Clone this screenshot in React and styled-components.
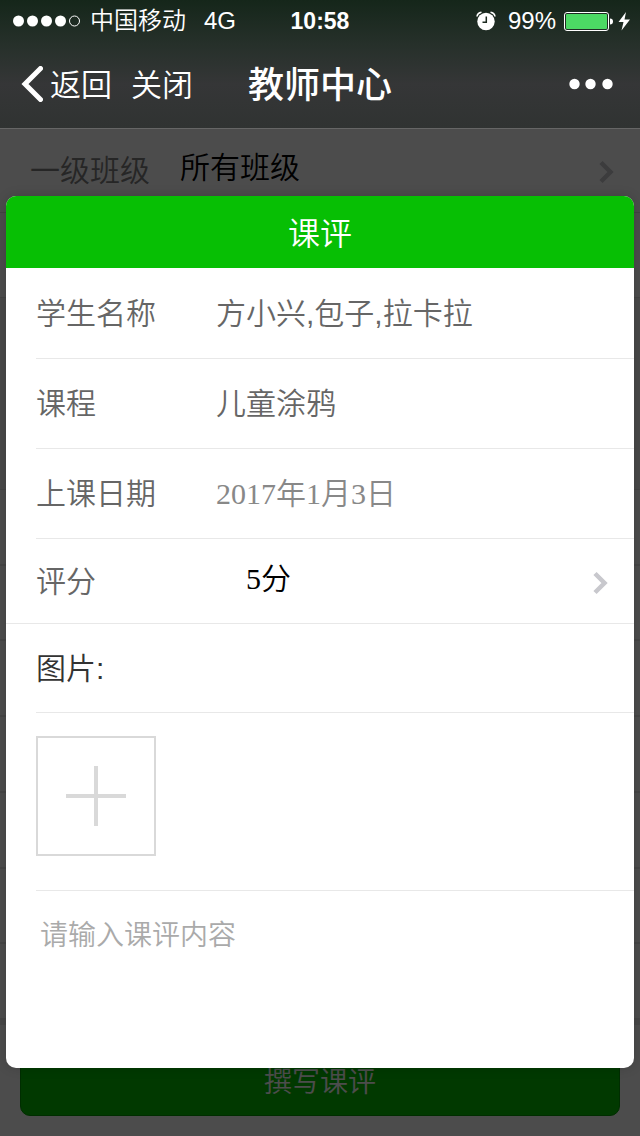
import { useState } from "react";
import styled, { createGlobalStyle } from "styled-components";

const GlobalStyle = createGlobalStyle`
  * {
    box-sizing: border-box;
  }
  body {
    margin: 0;
    background: #4c4c4c;
    font-family: "Liberation Sans", "Noto Sans CJK SC", sans-serif;
    font-weight: 350;
  }
  button, input, select, textarea {
    margin: 0;
    padding: 0;
    border: 0;
    border-radius: 0;
    background: none;
    font: inherit;
    outline: none;
  }
`;

const Page = styled.div`
  display: flex;
  flex-direction: column;
  min-height: 100vh;
`;

/* ---- top bar ---- */
const Header = styled.header`
  color: #fff;
  background: linear-gradient(#15261a 0, #26302a 44px, #353637 84px, #303332 128px);
  border-bottom: 1px solid #666;
`;

const StatusBar = styled.div`
  display: grid;
  grid-template-columns: 1fr auto 1fr;
  align-items: center;
  height: 40px;
  padding: 0 10px;
  font-size: 24px;
  line-height: 42px;
`;

const StatusSide = styled.div`
  display: flex;
  align-items: center;
  justify-content: ${(props) => (props.$end ? "flex-end" : "flex-start")};
  gap: ${(props) => (props.$end ? "8px" : "10px")};
  padding-left: 3px;
  white-space: nowrap;
`;

const Network = styled.span`
  margin-left: 8px;
`;

const Percent = styled.span`
  margin-left: 4px;
`;

const Time = styled.span`
  font-size: 23px;
  font-weight: 700;
`;

const NavBar = styled.nav`
  display: grid;
  grid-template-columns: 1fr auto 1fr;
  align-items: center;
  height: 88px;
  padding: 0 21px;
`;

const NavLinks = styled.div`
  display: flex;
  align-items: center;
  gap: 19px;
`;

const NavButton = styled.button`
  display: flex;
  align-items: center;
  gap: 7px;
  color: #fff;
  font-size: 31px;
  line-height: 44px;
`;

const NavText = styled.span`
  padding-top: 4px;
`;

const Title = styled.h1`
  margin: 0;
  padding-top: 4px;
  font-size: 36px;
  font-weight: 500;
  line-height: 44px;
`;

const MoreButton = styled.button`
  justify-self: end;
  display: flex;
  margin-right: 6px;
`;

/* ---- page under the mask ---- */
const Main = styled.main`
  position: relative;
  flex: 1;
  display: flex;
  flex-direction: column;
  background: #fff;
`;

const ClassRow = styled.div`
  display: flex;
  align-items: center;
  height: 84px;
  padding: 0 26px 6px 30px;
  border-bottom: 1px solid #e0e0e0;
  font-size: 30px;
`;

const ClassLabel = styled.label`
  width: 150px;
  color: #808080;
`;

const Select = styled.select`
  flex: 1;
  min-width: 0;
  height: 44px;
  padding-left: ${(props) => props.$indent || "0px"};
  appearance: none;
  color: #000;
  font-family: "Liberation Serif", "Noto Sans CJK SC", serif;
  line-height: 44px;
`;

const Summary = styled.div`
  height: ${(props) => props.$height};
  background: ${(props) => (props.$dim ? "#f2f2f2" : "#fff")};
  border-bottom: 1px solid #e0e0e0;
`;

const List = styled.ul`
  flex: 1;
  display: grid;
  margin: 0;
  padding: 0;
  list-style: none;
  border-bottom: 5px solid #ebebeb;
`;

const ListItem = styled.li`
  border-bottom: 2px solid #e8e8e8;
`;

const BottomBar = styled.div`
  padding: 25px 20px 20px;
`;

const WriteButton = styled.button`
  width: 100%;
  height: 66px;
  border: 1px solid #039702;
  border-radius: 10px;
  color: #fff;
  background: #04be02;
  font-size: 28px;
  line-height: 64px;
`;

/* ---- dialog ---- */
const Mask = styled.div`
  position: absolute;
  inset: 0;
  display: flex;
  flex-direction: column;
  padding: 67px 6px 68px;
  background: rgba(0, 0, 0, 0.7);
`;

const Dialog = styled.form`
  flex: 1;
  display: flex;
  flex-direction: column;
  overflow: hidden;
  border-radius: 10px;
  background: #fff;
  box-shadow: 0 0 12px rgba(0, 0, 0, 0.15);
  font-size: 30px;
`;

const DialogTitle = styled.h2`
  margin: 0;
  height: 72px;
  color: #fff;
  background: #07bf04;
  font-size: 32px;
  font-weight: 350;
  line-height: 76px;
  text-align: center;
`;

const Row = styled.div`
  display: flex;
  align-items: center;
  height: ${(props) => props.$height || "90px"};
  margin-left: ${(props) => (props.$full ? "0px" : "30px")};
  padding: 0 26px ${(props) => (props.$height ? "4px" : "6px")}
    ${(props) => (props.$full ? "30px" : "0px")};
  border-top: 1px solid ${(props) => (props.$first ? "transparent" : "#e8e8e8")};
`;

const Label = styled.label`
  width: 180px;
  color: #666;
`;

const TextInput = styled.input`
  flex: 1;
  min-width: 0;
  height: 44px;
  color: ${(props) => (props.$date ? "#888" : "#666")};
  font-family: ${(props) => (props.$date ? '"Liberation Serif"' : '"Liberation Sans"')},
    "Noto Sans CJK SC", sans-serif;
`;

const ImageLabel = styled.label`
  color: #333;
`;

const UploadRow = styled.div`
  height: 178px;
  margin-left: 30px;
  padding-top: 23px;
  border-top: 1px solid #e8e8e8;
`;

const UploadButton = styled.button`
  display: flex;
  align-items: center;
  justify-content: center;
  width: 120px;
  height: 120px;
  border: 2px solid #d9d9d9;
`;

const Comment = styled.textarea`
  flex: 1;
  min-height: 120px;
  margin-left: 30px;
  padding: 25px 20px 20px 4px;
  border-top: 1px solid #e8e8e8;
  resize: none;
  color: #333;
  font-size: 28px;
  line-height: 40px;

  &::placeholder {
    color: #aaa;
  }
`;

const ArrowIcon = styled.svg`
  margin-top: 8px;
`;

const Signal = () => (
  <svg width="67" height="12" viewBox="0 0 67 12" fill="#fff">
    <circle cx="5.5" cy="6" r="5.5" />
    <circle cx="19.5" cy="6" r="5.5" />
    <circle cx="33.5" cy="6" r="5.5" />
    <circle cx="47.5" cy="6" r="5.5" />
    <circle cx="61.5" cy="6" r="5" fill="none" stroke="#fff" />
  </svg>
);

const Alarm = () => (
  <svg width="20" height="20" viewBox="0 0 20 20">
    <circle cx="10" cy="10.5" r="8.7" fill="#fff" />
    <path d="M1 5.5Q1.5 2 5.5 1.3M19 5.5Q18.5 2 14.5 1.3" fill="none" stroke="#fff" strokeWidth="1.6" />
    <path d="M10.3 5.5V11.3H6.5" fill="none" stroke="#1c2a20" strokeWidth="1.5" />
  </svg>
);

const Battery = () => (
  <svg width="66" height="20" viewBox="0 0 66 20">
    <rect x="0.5" y="1.5" width="44" height="18" rx="2.5" fill="none" stroke="#fff" />
    <rect x="2" y="3" width="41" height="15" rx="1" fill="#4cd964" />
    <path d="M46 7.5Q49 7.5 49 10.5T46 13.5Z" fill="#fff" />
    <path d="M62 1L54.500 11H59.500L57.500 19.500L66 8.500H60.500Z" fill="#fff" />
  </svg>
);

const BackArrow = () => (
  <svg width="22" height="36" viewBox="0 0 22 36">
    <path d="M19.5 2.5L4 18L19.5 33.5" fill="none" stroke="#fff" strokeWidth="5" strokeLinecap="round" />
  </svg>
);

const More = () => (
  <svg width="44" height="12" viewBox="0 0 44 12" fill="#fff">
    <circle cx="5.5" cy="6" r="5.2" />
    <circle cx="21.5" cy="6" r="5.2" />
    <circle cx="38.5" cy="6" r="5.2" />
  </svg>
);

const Arrow = () => (
  <ArrowIcon width="15" height="24" viewBox="0 0 15 24">
    <path d="M2 2.5L11.5 12L2 21.5" fill="none" stroke="#c8c8cd" strokeWidth="4.5" />
  </ArrowIcon>
);

const Plus = () => (
  <svg width="60" height="60" viewBox="0 0 60 60">
    <path d="M30 0V60M0 30H60" stroke="#d9d9d9" strokeWidth="4" />
  </svg>
);

const records = [1, 2, 3, 4, 5, 6, 7];

const App = () => {
  const [students, setStudents] = useState("方小兴,包子,拉卡拉");
  const [course, setCourse] = useState("儿童涂鸦");
  const [date, setDate] = useState("2017年1月3日");

  return (
    <Page>
      <GlobalStyle />
      <Header>
        <StatusBar>
          <StatusSide>
            <Signal />
            <span>中国移动</span>
            <Network>4G</Network>
          </StatusSide>
          <Time>10:58</Time>
          <StatusSide $end>
            <Alarm />
            <Percent>99%</Percent>
            <Battery />
          </StatusSide>
        </StatusBar>
        <NavBar>
          <NavLinks>
            <NavButton type="button">
              <BackArrow />
              <NavText>返回</NavText>
            </NavButton>
            <NavButton type="button">
              <NavText>关闭</NavText>
            </NavButton>
          </NavLinks>
          <Title>教师中心</Title>
          <MoreButton type="button" aria-label="更多">
            <More />
          </MoreButton>
        </NavBar>
      </Header>
      <Main>
        <ClassRow>
          <ClassLabel htmlFor="class">一级班级</ClassLabel>
          <Select id="class">
            <option>所有班级</option>
          </Select>
          <Arrow />
        </ClassRow>
        <Summary $height="85px" />
        <Summary $height="192px" $dim />
        <List>
          {records.map((id) => (
            <ListItem key={id} />
          ))}
        </List>
        <BottomBar>
          <WriteButton type="button">撰写课评</WriteButton>
        </BottomBar>
        <Mask>
          <Dialog>
            <DialogTitle>课评</DialogTitle>
            <Row $first>
              <Label htmlFor="students">学生名称</Label>
              <TextInput
                id="students"
                value={students}
                onChange={(e) => setStudents(e.target.value)}
              />
            </Row>
            <Row>
              <Label htmlFor="course">课程</Label>
              <TextInput
                id="course"
                value={course}
                onChange={(e) => setCourse(e.target.value)}
              />
            </Row>
            <Row>
              <Label htmlFor="date">上课日期</Label>
              <TextInput
                $date
                id="date"
                value={date}
                onChange={(e) => setDate(e.target.value)}
              />
            </Row>
            <Row $height="85px">
              <Label htmlFor="score">评分</Label>
              <Select id="score" $indent="30px">
                <option>5分</option>
              </Select>
              <Arrow />
            </Row>
            <Row $height="89px" $full>
              <ImageLabel htmlFor="upload">图片:</ImageLabel>
            </Row>
            <UploadRow>
              <UploadButton id="upload" type="button">
                <Plus />
              </UploadButton>
            </UploadRow>
            <Comment aria-label="课评内容" placeholder="请输入课评内容" />
          </Dialog>
        </Mask>
      </Main>
    </Page>
  );
};

export default App;
